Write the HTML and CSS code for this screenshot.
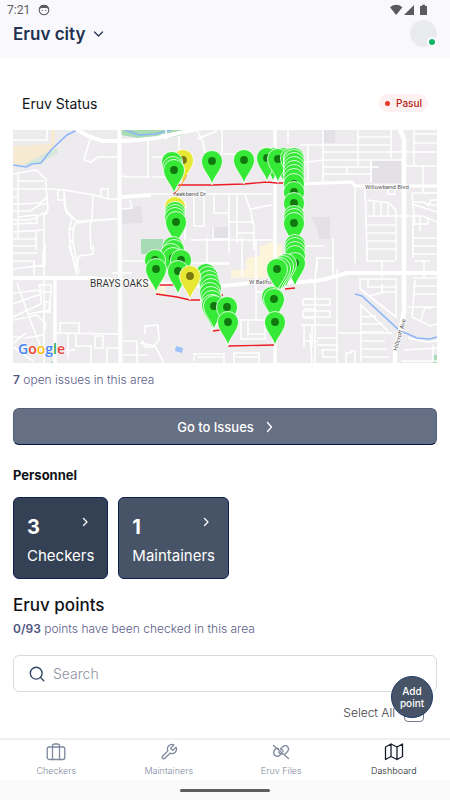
FILE: index.html
```html
<!DOCTYPE html>
<html lang="en">
<head>
<meta charset="utf-8">
<meta name="viewport" content="width=device-width, initial-scale=1">
<title>Eruv city</title>
<link rel="stylesheet" href="styles.css">
</head>
<body>
<div class="app">
  <header class="header">
    <div class="status">
      <span class="time">7:21</span>
      <svg class="face" width="12" height="12" viewBox="0 0 12 12"><circle cx="6" cy="6" r="4.8" fill="none" stroke="#5c5c5e" stroke-width="1.1"/><path d="M1.500 5V3.200L3.500 1h5l2 2.200V5L8.500 4h-5z" fill="#5c5c5e"/><circle cx="4.200" cy="6.400" r=".6" fill="#5c5c5e"/><circle cx="7.800" cy="6.400" r=".6" fill="#5c5c5e"/></svg>
      <svg class="signals" width="38" height="12" viewBox="0 0 38 12" fill="#5b5b5d"><path d="M0 3.2Q6.2-1.6 12.4 3.2L6.2 11z"/><path d="M24 1v10H14z"/><path d="M30 2h2V.7h3V2h2v9h-7z"/></svg>
    </div>
    <div class="titlebar">
      <button class="city" type="button">Eruv city
        <svg width="11" height="8" viewBox="0 0 11 8"><path d="M1.500 2 5.500 6l4-4" fill="none" stroke="currentColor" stroke-width="1.200" stroke-linecap="round" stroke-linejoin="round"/></svg>
      </button>
      <button class="avatar" type="button" aria-label="Account"><span class="online"></span></button>
    </div>
  </header>

  <main class="main">
    <div class="statusrow">
      <h2 class="statustitle">Eruv Status</h2>
      <span class="badge"><span class="dot"></span>Pasul</span>
    </div>

    <svg class="map" viewBox="13 130 424 233" preserveAspectRatio="xMidYMid slice" role="img" aria-label="Map of eruv points">
      <defs>
        <g id="pin"><path d="M0 24C-1.200 16-10.500 8.500-10.500 0a10.500 10.500 0 0 1 21 0C10.500 8.500 1.200 16 0 24z" stroke="#fff" stroke-width=".8"/><circle r="3.900" fill="#10780f" stroke="none"/></g>
        <g id="ypin"><path d="M0 24C-1.200 16-10.500 8.500-10.500 0a10.500 10.500 0 0 1 21 0C10.500 8.500 1.200 16 0 24z" fill="#e8e733" stroke="#fff" stroke-width=".8"/><circle r="3.900" fill="#787811"/></g>
      </defs>
      <rect x="13" y="130" width="424" height="233" fill="#eeebef"/>
      <path d="M13 146 51 144V130h4v15l-16 15-18 6-8-1z" fill="#f6ead3"/>
      <path d="M21 166 44 154l13-6 1 5-17 10z" fill="#d6e8dc"/>
      <path d="M121 130h75l-18 6-29 4-28-5z" fill="#a8dab5"/>
      <path d="M141 239h22v15h-22zM433 355h4v8h-4zM50 363l5-3v3z" fill="#a8dab5"/>
      <path d="M122 208l19-2 2 17-21 1zM211 227h17v11h-17zM372 160h29v23h-29zM311 217h19v22h-11l-2-12zM323 130h12v13h-12z" fill="#e3e1e5"/>
      <path d="M140 279l24-3 2 18-8 2-3-6-14-4zM246 258l14-2V246l15-5v33h-8v4h-36v-8h15zM268 244h14v24h-14z" fill="#fdf4dc"/>
      <path d="M176 346l7 2-1 5-7-2z" fill="#9cc2f8"/>
      <g fill="none" stroke="#8db6f7" stroke-width="1.600"><path d="M13 165l13 2 6-3 9-1 10-13 16-15 10-5M125 130l14 5 16-1 16-4"/><path d="M355 294l7 2 37 34 18 8 13 1 7-2"/></g>
      <g fill="none" stroke="#fff" stroke-width="1.600">
        <path d="M13 140h34v-10M13 174l23-4 10 9v7l2 23-4 6v148M18 174v64M18 181h26M13 189h38l13 1 30 5 14 4h14M13 197h5M13 204h5l22-1 8-6M13 211h17l11-7h7M13 220h16l6-2 8-5h5M18 217l18-2 1 8-24 1M13 232l30-2M36 230v20M13 239h24M13 246h24M58 190v10h6v-10l2 20 12 13 22-3 17-1M101 198v-9h7v11M93 195l-1 25-2 6 1 24"/>
        <path d="M90 139l-6 21 7 2 7-5h23M122 176l6 1h22M148 140v37M122 209l10-1-2-8M64 202l2 10 6 6-3 13 2 20 6 24M117 219l-40 2-4 8 0 14 6 30M70 229h5M70 241h4"/>
        <path d="M13 253h25M13 261h21v14M13 269l32-4V245M43 250v17M69 245l7 23 3-12 14-2v-8M122 261h30M112 273h20"/>
        <path d="M13 293l28-3-2-5h12v7H39M13 304l19-7 9-3v10l-28 13M51 290l-2 20-20 4M45 302h5v10h-6zM17 283l15 42 11 27M13 320l24-5 9 9-3 11-18 3M13 343l13-10M13 347l20 14M60 333v-10h19v10M55 333l65 1M68 334v25M76 334v12h15v17M95 336h8v12h-8zM57 350h18M107 363v-15h13M123 341h14v22M123 355h25"/>
        <path d="M161 135l36-5 6 12 2 14M197 139l20-8M152 157h28M152 177h18M150 194h122M185 202v38M194 196v30h10v-36M214 195v18h15v26h-16v-12M229 195v58M245 195l5 14 4 18v23M251 209l21-4M237 195v48M229 222h25M237 233h18M273 150h22M288 130v13M205 154h35M190 240h83M185 250v30M207 264h22M207 238v35"/>
        <path d="M242 238v38M256 240v80M190 263h40M256 292h16M231 320h41M241 321v18h24v-18M248 321v13h17M304 299h12M304 309h12M304 318h12"/>
        <path d="M145 334v-8l13-1 1 15-6 7h-8l-3-7M140 343l15 3 9 17M194 361v-7h30v9M234 363v-10h25v10M197 357h26M236 357h23"/>
        <path d="M300 145h91M323 130v52M308 145v36M300 163l23-3M323 152h79M323 160h48M323 167h56M323 174h48M347 167v7M358 130v35M391 130v28M358 137h33M371 160v22M371 160h31M414 130v36M414 134h23M414 143h23M391 152h46M406 166h31M423 166v27M412 193h25M412 193l3 32M437 205h-9l-4-3-11 0M428 206l3-6h6M412 204l25 8M388 190v4h7v-5"/>
        <path d="M355 184v79M365 186l2 68M367 200l22 3 7 7v50M374 202v13M381 203v13M388 205v11M367 216h55l15 6M367 225h28M367 233h28M367 241h29M367 249h29M413 216v42M413 224h15v-7M420 217v14M413 238h24M413 246h24M413 254h24M333 238v31M300 246h24"/>
        <path d="M317 270v-12h16v21M317 258l-2 22v83M337 269v94M304 299h26v6h-27v-6M303 311h27v6h-27zM300 325h38M304 325v22M312 325v22M303 341h15M317 338h20M317 345h20M322 350h15v7h-14zM346 363v-10h5v-2h4v12M338 333h54"/>
        <path d="M367 249v12h28M367 261v-12M382 261v16M360 289v-10h36v38l-36-28M368 279v8h28M370 296l14-4h13M382 284v8M360 304l28 27M361 304v58M361 317l15-1M361 324h22M361 332h23M361 341h24M361 349h26M361 357h28M415 261h15M424 261v16M413 278h24M413 286h24M413 294h24M415 280l-3 37 18 9 7-2M408 338l18 4 11-1M404 350l33-2M401 361h36M437 307h-30M420 322l5-14h7M433 345v16"/>
        <path d="M166 130v10M179 136v18M222 130v23M310 333l2 30M13 337h8"/>
      </g>
      <g fill="none" stroke="#fff" stroke-width="4">
        <path d="M119.500 130v80l1 153M76 129l12 7 14 5h25l30-3 45-10M122 197l29-2M13 278h35l40 0 54 4 70 5 50-5h40l20-2 25-7h90"/><path d="M55 280v83M275 130v235" stroke-width="3.500"/>
        <path d="M300 184l52-2 3 4h82" stroke-width="3"/><path d="M400 130l4 9v173l-5 25-4 10v16" stroke-width="4.500"/>
      </g>
      <g fill="none" stroke="#eb1c24" stroke-width="1.400"><path d="M174 185l38 0 32-1 23-2 10 1 17 0M156 285l21 0M156 294l21 3 13 3h10M207 297l16-2M213 331l14-2M228 346l46-1M285 289l10-1"/></g>
      <g class="maplabel">
        <text x="174" y="196">reekbend Dr</text><text x="365" y="189">Willowbend Blvd</text><text x="249" y="284">W Bellfort</text>
        <text transform="translate(397 351) rotate(-74)">Hillcroft Ave</text>
        <text class="district" x="90" y="287">BRAYS OAKS</text>
      </g>
      <g fill="#35e936">
        <use href="#ypin" x="183" y="160"/><path d="M187 175q-4 8-11 17" fill="none" stroke="#f59a26"/>
        <use href="#pin" x="172" y="162"/><use href="#pin" x="173" y="167"/><use href="#pin" x="174" y="170"/>
        <use href="#pin" x="212" y="161"/><use href="#pin" x="244" y="160"/>
        <use href="#pin" x="273" y="158"/><use href="#pin" x="267" y="158"/><use href="#pin" x="283" y="158"/><use href="#pin" x="278" y="159"/>
        <use href="#pin" x="291" y="158"/><use href="#pin" x="294" y="158"/><use href="#pin" x="294" y="160"/><use href="#pin" x="294" y="163"/><use href="#pin" x="294" y="167"/><use href="#pin" x="294" y="171"/><use href="#pin" x="294" y="175"/><use href="#pin" x="294" y="179"/><use href="#pin" x="294" y="184"/><use href="#pin" x="294" y="192"/><use href="#pin" x="294" y="203"/>
        <use href="#pin" x="294" y="216"/><use href="#pin" x="294" y="219"/><use href="#pin" x="294" y="223"/>
        <use href="#ypin" x="175" y="207"/><use href="#pin" x="175" y="212"/><use href="#pin" x="175" y="215"/><use href="#pin" x="175" y="218"/><use href="#pin" x="176" y="222"/>
        <use href="#pin" x="173" y="247"/><use href="#pin" x="174" y="250"/><use href="#pin" x="171" y="254"/><use href="#pin" x="173" y="258"/><use href="#pin" x="181" y="260"/><use href="#pin" x="155" y="260"/><use href="#pin" x="156" y="269"/><use href="#pin" x="178" y="271"/>
        <use href="#pin" x="206" y="274"/><use href="#pin" x="208" y="277"/><use href="#pin" x="209" y="281"/><use href="#pin" x="210" y="285"/><use href="#pin" x="211" y="289"/><use href="#pin" x="210" y="293"/><use href="#pin" x="211" y="297"/><use href="#pin" x="212" y="301"/><use href="#ypin" x="190" y="276"/><use href="#pin" x="212" y="305"/><use href="#pin" x="214" y="306"/><use href="#pin" x="227" y="307"/><use href="#pin" x="228" y="322"/>
        <use href="#pin" x="295" y="245"/><use href="#pin" x="295" y="248"/><use href="#pin" x="295" y="252"/><use href="#pin" x="295" y="256"/><use href="#pin" x="295" y="263"/><use href="#pin" x="286" y="264"/><use href="#pin" x="283" y="266"/><use href="#pin" x="280" y="268"/><use href="#pin" x="277" y="269"/><use href="#pin" x="272" y="297"/><use href="#pin" x="274" y="299"/><use href="#pin" x="275" y="322"/>
      </g>
      <path d="M173 194l3-2" stroke="#eb1c24"/>
      <text class="google" x="18" y="354"><tspan fill="#4285f4">G</tspan><tspan fill="#ea4335">o</tspan><tspan fill="#fbbc05">o</tspan><tspan fill="#4285f4">g</tspan><tspan fill="#34a853">l</tspan><tspan fill="#ea4335">e</tspan></text>
    </svg>

    <p class="note"><b>7</b> open issues in this area</p>
    <button class="issues" type="button">Go to Issues
      <svg width="7" height="12" viewBox="0 0 7 12"><path class="chev" d="m1.500 1.500 4 4.500-4 4.500"/></svg>
    </button>

    <h3 class="personnel">Personnel</h3>
    <div class="cards">
      <button class="card dark" type="button"><span class="cardtop"><b>3</b><svg width="7" height="10" viewBox="0 0 7 10"><path class="chev" d="m1.500 1.500 3.500 3.500-3.500 3.500"/></svg></span><span>Checkers</span></button>
      <button class="card" type="button"><span class="cardtop"><b>1</b><svg width="7" height="10" viewBox="0 0 7 10"><path class="chev" d="m1.500 1.500 3.500 3.500-3.500 3.500"/></svg></span><span>Maintainers</span></button>
    </div>

    <h2 class="points">Eruv points</h2>
    <p class="note tight"><b>0/93</b> points have been checked in this area</p>
    <label class="search">
      <svg width="16" height="16" viewBox="0 0 16 16" fill="none" stroke="#344968" stroke-width="1.400" stroke-linecap="round"><circle cx="7.200" cy="7.200" r="5.900"/><path d="m11.500 11.500 3.300 3.200"/></svg>
      <input type="search" placeholder="Search" aria-label="Search">
    </label>
    <label class="selectall">Select All <input type="checkbox"></label>
    <button class="fab" type="button">Add<br>point</button>
  </main>

  <nav class="nav">
    <a href="#checkers"><svg width="20" height="18" viewBox="0 0 20 18"><rect x="1.200" y="4" width="17.600" height="12.500" rx="2"/><path d="M6.500 16.500V3q0-2 2-2h3q2 0 2 2v13.500"/></svg>Checkers</a>
    <a href="#maintainers"><svg width="18" height="18" viewBox="0 0 24 24"><path d="M14.700 6.300a1 1 0 0 0 0 1.400l1.600 1.600a1 1 0 0 0 1.400 0l3.770-3.770a6 6 0 0 1-7.940 7.940l-6.910 6.910a2.120 2.120 0 0 1-3-3l6.910-6.910a6 6 0 0 1 7.940-7.940z"/></svg>Maintainers</a>
    <a href="#files"><svg width="18" height="18" viewBox="0 0 18 18"><path d="M1.500 2.500l15 13M6.500 5.500Q4 4.500 2.700 7q-2 2.500-.2 5 2.800 2.500 5.200.3l1.500-1.500M6.800 9q1 2.500 3.500 2M8.500 6l2.200-2.200q2.800-2.300 5 0 1.800 2.500-.2 4.700l-2.200 2.200M11.200 8.500Q11 6.500 8.800 6.300"/></svg>Eruv Files</a>
    <a class="active" href="#dashboard"><svg width="20" height="18" viewBox="0 0 20 18"><path d="M1.500 4v12.500l5.500-3 6 3 5.500-3V1L13 4 7 1zM7 1v12.500M13 4v12.500"/></svg>Dashboard</a>
  </nav>
  <div class="system"><span class="handle"></span></div>
</div>
</body>
</html>
```
FILE: styles.css
```css
* { box-sizing: border-box; }
body { margin: 0; background: #fff; color: #101318; font-family: Inter, "Liberation Sans", sans-serif; }
button, input { font: inherit; }
button { border: 0; cursor: pointer; }
h2, h3, p { margin: 0; }
.app { min-height: 100vh; display: flex; flex-direction: column; }
.header { background: #f8f8fd; height: 58px; }
.status { height: 20px; padding: 0 22px 0 7px; display: flex; align-items: center; font: 12px/20px Roboto, sans-serif; color: #5c5c5e; }
.face { margin-left: 8px; }
.signals { margin-left: auto; }
.titlebar { display: flex; justify-content: space-between; padding: 0 13px; }
.city { display: flex; align-items: center; gap: 8px; background: none; padding: 0; height: 28px; font-size: 17px; font-weight: 600; color: #22314f; }
.avatar { position: relative; width: 27px; height: 27px; border-radius: 50%; background: #eaebef; padding: 0; }
.online { position: absolute; right: 0; bottom: 0; width: 10px; height: 10px; border: 2px solid #fff; border-radius: 50%; background: #12b565; }
.main { position: relative; flex: 1; padding: 36px 13px 16px; display: flex; flex-direction: column; }
.statusrow { display: flex; justify-content: space-between; align-items: center; padding: 0 9px; height: 18px; margin-bottom: 18px; }
.statustitle { font-size: 14px; font-weight: 400; }
.badge { display: flex; align-items: center; gap: 6px; height: 18px; padding: 0 6px; border-radius: 9px; background: #fef1f1; color: #b42318; font-size: 10px; font-weight: 500; }
.dot { width: 5px; height: 5px; border-radius: 50%; background: #f0352a; }
.map { display: block; width: 100%; height: auto; }
.maplabel { font: 6px Roboto, sans-serif; fill: #555; stroke: #fff; stroke-width: 1px; paint-order: stroke; }
.district { font-size: 10px; fill: #333; }
.google { font: 600 14px "Open Sans", sans-serif; stroke: #fff; stroke-width: 1px; paint-order: stroke; }
.note { margin-top: 9px; font-size: 12px; line-height: 16px; font-weight: 300; color: #5a5d88; }
.note b { font-weight: 600; color: #50547f; }
.issues { display: flex; align-items: center; justify-content: center; gap: 12px; height: 37px; margin-top: 20px; border: 1px solid #546078; border-bottom-color: #0a1641; border-radius: 6px; background: #667085; color: #fff; font-size: 13px; font-weight: 500; }
.chev { fill: none; stroke: #fff; stroke-width: 1.3px; stroke-linecap: round; stroke-linejoin: round; }
.personnel { margin-top: 22px; font-size: 13px; line-height: 16px; font-weight: 700; }
.cards { display: flex; gap: 10px; margin-top: 14px; }
.card { height: 82px; padding: 8px 13px 4px; border: 1px solid #0f2050; border-radius: 6px; background: #475467; color: #fff; font-size: 15px; font-weight: 400; text-align: left; display: flex; flex-direction: column; justify-content: center; gap: 7px; }
.dark { background: #344054; }
.cardtop { display: flex; justify-content: space-between; width: 100%; padding-right: 5px; }
.cardtop b { font-size: 20px; line-height: 24px; font-weight: 700; }
.cardtop svg { margin-top: 2px; }
.points { margin-top: 16px; font-size: 17px; line-height: 20px; font-weight: 500; }
.tight { margin-top: 6px; }
.search { display: flex; align-items: center; gap: 8px; height: 37px; margin-top: 18px; padding: 0 15px; border: 1px solid #d8d9e2; border-radius: 6px; }
.search input { flex: 1; min-width: 0; border: 0; outline: 0; padding: 0; background: none; font-size: 14px; font-weight: 300; }
.search input::placeholder { color: #8f92a2; }
.selectall { align-self: flex-end; display: flex; align-items: center; gap: 9px; height: 20px; margin: 10px 13px 0 0; font-size: 12px; font-weight: 300; color: #3f4045; }
.selectall input { appearance: none; width: 20px; height: 20px; margin: 0; border: 1px solid #777c8c; border-radius: 4px; }
.fab { position: absolute; right: 17px; bottom: 20px; width: 42px; height: 42px; padding: 0; border: 1px solid #1c3b66; border-radius: 50%; background: #475467; color: #fff; font-size: 10px; line-height: 12px; font-weight: 500; }
.nav { display: grid; grid-template-columns: repeat(4, 1fr); height: 42px; border-top: 2px solid #f0f0f2; }
.nav a { display: flex; flex-direction: column; align-items: center; gap: 4px; padding-top: 3px; font-size: 9px; line-height: 12px; font-weight: 300; color: #7d889d; text-decoration: none; }
.nav svg { fill: none; stroke: currentColor; stroke-width: 1.3px; stroke-linecap: round; stroke-linejoin: round; }
.nav path { vector-effect: non-scaling-stroke; }
.nav .active { color: #171c2b; }
.system { height: 20px; background: #fafafa; display: flex; align-items: center; justify-content: center; }
.handle { width: 90px; height: 3px; border-radius: 2px; background: #5e5e5e; }
```
